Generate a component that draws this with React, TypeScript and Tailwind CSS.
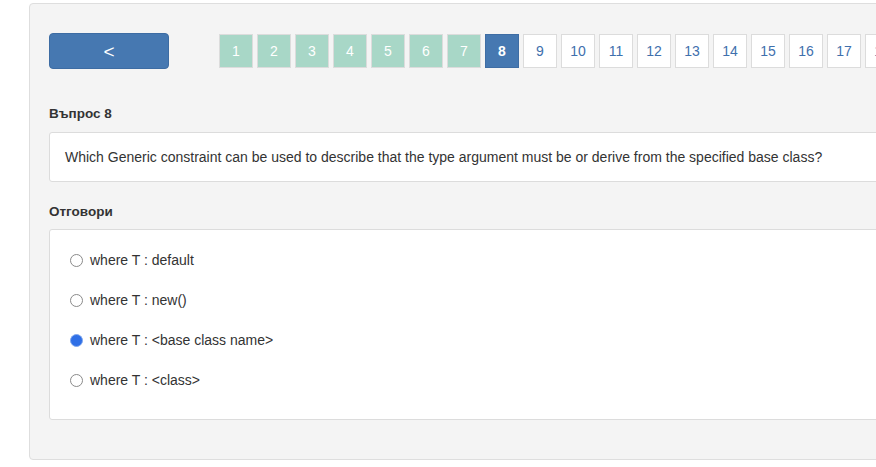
import React from "react";

const pages = Array.from({ length: 18 }, (_, i) => i + 1);
const current = 8;

const answers = [
  "where T : default",
  "where T : new()",
  "where T : <base class name>",
  "where T : <class>",
];
const selected = 2;

export default function App() {
  return (
    <div className="w-[876px] h-[467px] overflow-hidden bg-white font-['Liberation_Sans',Arial,sans-serif] text-[14px] text-[#333]">
      <div className="ml-[29px] mt-[3px] w-[1000px] h-[457px] rounded-[4px] border border-[#dedede] bg-[#f4f4f4] pl-[19px] pr-[20px] pt-[29px]">
        {/* nav row */}
        <div className="flex items-start">
          <button className="h-[36px] w-[120px] rounded-[4px] border border-[#3d6ca3] bg-[#4678b1] text-[19px] leading-none text-white">
            &lt;
          </button>
          <div className="ml-[50px] flex gap-[4px] pt-[1px]">
            {pages.map((p) => {
              const done = p < current;
              const active = p === current;
              return (
                <div
                  key={p}
                  className={
                    "flex h-[34px] w-[34px] shrink-0 items-center justify-center border text-[14px] " +
                    (active
                      ? "border-[#3f6da4] bg-[#4678b1] font-bold text-white"
                      : done
                      ? "border-[#dcdcdc] bg-[#a8d7c7] text-white"
                      : "border-[#dcdcdc] bg-white text-[#3f70ad]")
                  }
                >
                  {p}
                </div>
              );
            })}
          </div>
        </div>

        {/* question */}
        <div className="mt-[36px] text-[13.5px] font-bold leading-[18px] text-[#333]">Въпрос 8</div>
        <div className="mt-[9px] rounded-[3px] border border-[#dcdcdc] bg-white px-[15px] py-[15px] leading-[18px]">
          Which Generic constraint can be used to describe that the type argument must be or derive from the specified base class?
        </div>

        {/* answers */}
        <div className="mt-[21px] text-[13.5px] font-bold leading-[18px] text-[#333]">Отговори</div>
        <div className="mt-[8px] flex flex-col gap-[20px] rounded-[3px] border border-[#dcdcdc] bg-white pb-[29px] pl-[20px] pt-[20px]">
          {answers.map((a, i) => (
            <div key={a} className="flex h-[20px] items-center">
              {i === selected ? (
                <span className="h-[13px] w-[13px] rounded-full border border-[#7fa7ee] bg-[#2f6fe6]" />
              ) : (
                <span className="h-[13px] w-[13px] rounded-full border border-[#8a8a8a] bg-white" />
              )}
              <span className="ml-[7px] leading-[18px]">{a}</span>
            </div>
          ))}
        </div>
      </div>
    </div>
  );
}
